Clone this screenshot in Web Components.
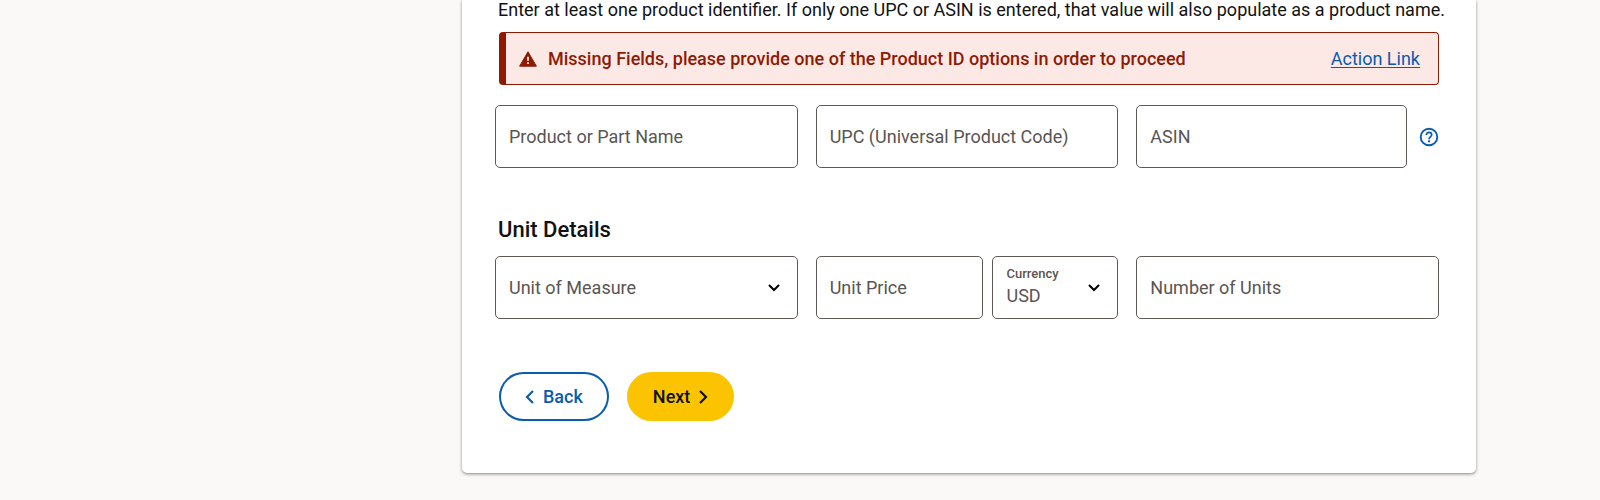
<!DOCTYPE html>
<html lang="en">
<head>
<meta charset="utf-8">
<meta name="viewport" content="width=device-width, initial-scale=1">
<title>Product details</title>
<style>
  body {
    margin: 0;
    background: #faf9f8;
    color: #121212;
    font: 18px/24px Roboto, "Liberation Sans", sans-serif;
    --field-border: #5f5855;
    --field-text: #595552;
    --blue: #0a5cad;
    --error: #8f1a04;
    --error-bg: #fce9e5;
    --yellow: #fcc400;
  }
</style>
</head>
<body>
<product-page>
  <form-card>
    <form-section>
      <p slot="intro">Enter at least one product identifier. If only one UPC or ASIN is entered, that value will also populate as a product name.</p>
      <alert-banner slot="intro" href="#product-id" action="Action Link">Missing Fields, please provide one of the Product ID options in order to proceed</alert-banner>
      <text-field label="Product or Part Name"></text-field>
      <text-field label="UPC (Universal Product Code)"></text-field>
      <field-group>
        <text-field label="ASIN"></text-field>
        <help-button label="What is an ASIN?"></help-button>
      </field-group>
    </form-section>
    <form-section>
      <h2 slot="intro">Unit Details</h2>
      <select-field label="Unit of Measure" options=",Each,Box,Case"></select-field>
      <field-group class="price">
        <text-field label="Unit Price"></text-field>
        <select-field label="Currency" options="USD,CAD,EUR"></select-field>
      </field-group>
      <text-field label="Number of Units"></text-field>
    </form-section>
    <pill-button slot="actions" kind="outline">Back</pill-button>
    <pill-button slot="actions" kind="primary">Next</pill-button>
  </form-card>
</product-page>

<script>
const define = (name, html, setup) => {
  const template = document.createElement('template');
  template.innerHTML = html;
  customElements.define(name, class extends HTMLElement {
    connectedCallback() {
      if (this.shadowRoot) return;
      const root = this.attachShadow({ mode: 'open' });
      root.append(template.content.cloneNode(true));
      if (setup) setup(this, root);
    }
  });
};

define('product-page', `
  <style>
    :host { display: block; padding: 0 124px 27px 462px; }
    @media (max-width: 1100px) { :host { padding: 0 24px 27px; } }
  </style>
  <main><slot></slot></main>`);

define('form-card', `
  <style>
    :host { display: block; }
    form {
      padding: 0 37px 52px 33px;
      background: #fff;
      border-radius: 0 0 5px 5px;
      box-shadow: 0 1px 3px rgba(0, 0, 0, .4), 0 2px 4px rgba(0, 0, 0, .08);
    }
    .sections { display: grid; gap: 48px; }
    .actions { display: flex; flex-wrap: wrap; gap: 18px; margin: 53px 0 0 4px; }
  </style>
  <form>
    <div class="sections"><slot></slot></div>
    <div class="actions"><slot name="actions"></slot></div>
  </form>`, (host, root) => {
  root.querySelector('form').addEventListener('submit', e => e.preventDefault());
});

define('form-section', `
  <style>
    :host { display: block; min-width: 0; }
    .intro { padding-left: 3px; }
    .fields { display: grid; grid-template-columns: repeat(3, minmax(0, 1fr)); gap: 18px; }
    ::slotted(p) { margin: 0 0 12px; line-height: 20px; }
    ::slotted(h2) { margin: 0; padding-bottom: 12px; font-size: 22px; line-height: 28px; font-weight: 500; }
    ::slotted(alert-banner) { margin: 0 0 20px 1px; }
    @media (min-width: 1600px) { ::slotted(p) { white-space: nowrap; } }
    @media (max-width: 900px) { .fields { grid-template-columns: minmax(0, 1fr); } }
  </style>
  <section>
    <div class="intro"><slot name="intro"></slot></div>
    <div class="fields"><slot></slot></div>
  </section>`);

define('alert-banner', `
  <style>
    :host { display: block; color: var(--error); }
    .alert {
      display: flex; align-items: center; gap: 11px;
      box-sizing: border-box; min-height: 53px; padding: 0 18px 0 13px;
      background: var(--error-bg);
      border: 1px solid currentColor; border-left-width: 7px; border-radius: 4px;
    }
    .message { flex: 1; font-weight: 500; }
    a { color: var(--blue); text-decoration-thickness: 1px; text-underline-offset: 2px; }
    svg { flex: none; }
  </style>
  <div class="alert" role="alert">
    <svg width="18" height="16" viewBox="0 0 18 16" aria-hidden="true">
      <path fill="currentColor" stroke="currentColor" stroke-linejoin="round" d="M9 .8 17.4 15.2H.6Z"/>
      <path stroke="#fce9e5" stroke-width="1.8" d="M9 5.8v4M9 11.2v1.8"/>
    </svg>
    <span class="message"><slot></slot></span>
    <a></a>
  </div>`, (host, root) => {
  const link = root.querySelector('a');
  link.href = host.getAttribute('href');
  link.textContent = host.getAttribute('action');
});

define('field-group', `
  <style>
    :host { display: flex; align-items: center; gap: 12px; min-width: 0; }
    :host(.price) { gap: 9px; }
    ::slotted(text-field) { flex: 4 1 0; min-width: 0; }
    ::slotted(select-field) { flex: 3 1 0; min-width: 0; }
  </style>
  <slot></slot>`);

const fieldStyle = `
  :host { display: block; }
  .field { display: grid; align-items: center; }
  .field > * { grid-area: 1 / 1; }
  input, select {
    box-sizing: border-box; width: 100%; height: 63px; margin: 0; padding: 20px 13px 0;
    appearance: none; background: #fff; color: var(--field-text); font: inherit;
    border: 1px solid var(--field-border); border-radius: 5px;
  }
  label { padding-left: 14px; color: var(--field-text); pointer-events: none; }
  .filled label { align-self: start; padding-top: 8px; font-size: 13px; line-height: 20px; font-weight: 500; }
  :focus { outline: 2px solid var(--blue); outline-offset: -1px; }`;

define('text-field', `
  <style>${fieldStyle}</style>
  <div class="field">
    <input id="control" type="text">
    <label for="control"></label>
  </div>`, (host, root) => {
  const field = root.querySelector('.field');
  const input = root.querySelector('input');
  root.querySelector('label').textContent = host.getAttribute('label');
  input.addEventListener('input', () => field.classList.toggle('filled', input.value !== ''));
});

define('select-field', `
  <style>${fieldStyle}
    select { padding-top: 16px; }
    svg { justify-self: end; margin-right: 18px; pointer-events: none; }
  </style>
  <div class="field">
    <select id="control"></select>
    <label for="control"></label>
    <svg width="12" height="8" viewBox="0 0 12 8" fill="none" stroke="#000" stroke-width="2" aria-hidden="true"><path d="m1 1 5 5 5-5"/></svg>
  </div>`, (host, root) => {
  const field = root.querySelector('.field');
  const select = root.querySelector('select');
  root.querySelector('label').textContent = host.getAttribute('label');
  select.append(...host.getAttribute('options').split(',').map(text => new Option(text, text)));
  const update = () => field.classList.toggle('filled', select.value !== '');
  select.addEventListener('change', update);
  update();
});

define('help-button', `
  <style>
    :host { display: block; }
    button { display: block; margin: 0; padding: 0; border: 0; background: none; color: var(--blue); cursor: pointer; }
    svg { display: block; }
  </style>
  <button type="button">
    <svg width="20" height="20" viewBox="0 0 20 20" fill="none" stroke="currentColor" aria-hidden="true">
      <circle cx="10" cy="10" r="8.3" stroke-width="1.9"/>
      <path stroke-width="1.7" d="M7.3 8c0-1.7 1.2-2.7 2.7-2.7s2.7 1 2.7 2.5c0 2-2.7 2.3-2.7 4.5"/>
      <path stroke-width="1.9" d="M10 13.3v1.9"/>
    </svg>
  </button>`, (host, root) => {
  root.querySelector('button').setAttribute('aria-label', host.getAttribute('label'));
});

define('pill-button', `
  <style>
    :host { display: block; }
    button {
      display: flex; align-items: center; gap: 9px;
      height: 49px; margin: 0; padding: 0 26px; border: 0; border-radius: 25px;
      font: inherit; font-weight: 500; cursor: pointer;
    }
    .outline { color: var(--blue); background: #fff; box-shadow: inset 0 0 0 2px currentColor; }
    .primary { color: #121212; background: var(--yellow); flex-direction: row-reverse; }
    .primary svg { transform: scaleX(-1); }
  </style>
  <button type="button">
    <svg width="9" height="14" viewBox="0 0 9 14" fill="none" stroke="currentColor" stroke-width="2.2" aria-hidden="true"><path d="M8 1 2 7l6 6"/></svg>
    <span><slot></slot></span>
  </button>`, (host, root) => {
  root.querySelector('button').className = host.getAttribute('kind');
});
</script>
</body>
</html>
